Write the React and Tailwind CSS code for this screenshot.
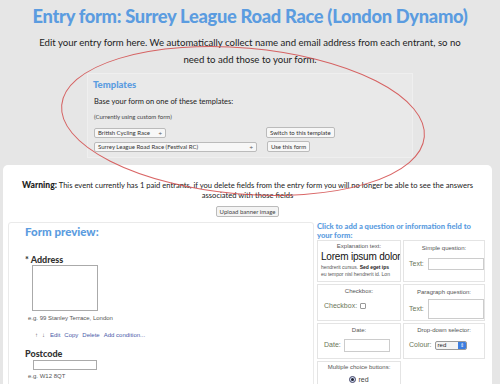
export default function App() {
  const gill = { fontFamily: 'Lato, "Open Sans", sans-serif' };
  const helv = { fontFamily: '"Liberation Sans", Arial, sans-serif' };

  return (
    <div className="relative w-[500px] h-[384px] overflow-hidden bg-[#e6e6e6] text-[#222]" style={gill}>
      <h1 className="pt-[4px] text-center whitespace-nowrap text-[18.3px] leading-[24px] font-black text-[#5b9ce0] tracking-[-0.3px]">
        Entry form: Surrey League Road Race (London Dynamo)
      </h1>
      <p className="mt-[6px] text-center text-[9.6px] leading-[17px] text-[#222] whitespace-nowrap">
        Edit your entry form here. We automatically collect name and email address from each entrant, so no<br />
        need to add those to your form.
      </p>

      <div className="mx-auto mt-[5px] w-[326px] h-[85px] border border-[#efefef] bg-[#e9e9e9] pl-[5px] pt-[5px]">
        <div className="text-[9.5px] leading-[12px] font-black text-[#5b9ce0]">Templates</div>
        <div className="mt-[5px] pl-[1px] text-[7.5px] leading-[11px]">Base your form on one of these templates:</div>
        <div className="mt-[5px] pl-[1px] text-[6px] leading-[9px] text-[#444]">(Currently using custom form)</div>
        <div className="mt-[6px] flex flex-col gap-[3px] pl-[1px]">
          <div className="flex items-center">
            <div className="flex h-[10px] w-[72px] items-center justify-between rounded-[2px] border border-[#bbb] bg-[#f7f7f7] px-[3px] text-[6px] text-[#333]">
              <span>British Cycling Race</span><span className="text-[6px]">÷</span>
            </div>
            <div className="ml-[100px] flex h-[11px] items-center rounded-[2px] border border-[#bbb] bg-[#f7f7f7] px-[3px] text-[6px] text-[#333]">Switch to this template</div>
          </div>
          <div className="flex items-center">
            <div className="flex h-[10px] w-[163px] items-center justify-between rounded-[2px] border border-[#bbb] bg-[#f7f7f7] px-[3px] text-[6px] text-[#333]">
              <span>Surrey League Road Race (Festival RC)</span><span className="text-[6px]">÷</span>
            </div>
            <div className="ml-[10px] flex h-[11px] items-center rounded-[2px] border border-[#bbb] bg-[#f7f7f7] px-[3px] text-[6px] text-[#333]">Use this form</div>
          </div>
        </div>
      </div>

      <div className="ml-[3px] mt-[7px] h-[300px] w-[489px] rounded-[5px] bg-white pt-[15px]">
        <p className="text-center text-[7.6px] leading-[10px] text-[#222] whitespace-nowrap">
          <b className="text-[8.6px] font-black">Warning:</b> This event currently has 1 paid entrants, if you delete fields from the entry form you will no longer be able to see the answers<br />
          associated with those fields
        </p>
        <div className="mt-[6px] flex justify-center">
          <div className="flex h-[11px] items-center rounded-[2px] border border-[#bbb] bg-[#f4f4f4] px-[3px] text-[6px] text-[#444]">Upload banner image</div>
        </div>

        <div className="mt-[5px] flex">
          <div className="ml-[5px] h-[200px] w-[306px] rounded-[3px] border border-[#eaeaea] pl-[16px] pt-[2px]" style={helv}>
            <div className="text-[11.5px] leading-[14px] font-black text-[#5b9ce0]" style={gill}>Form preview:</div>
            <div className="mt-[16px] text-[9px] leading-[10px] font-black text-[#333]" style={gill}>* Address</div>
            <div className="ml-[7px] h-[46px] w-[66px] border border-[#aaa]" />
            <div className="mt-[3px] ml-[3px] text-[6px] leading-[8px] text-[#555]">e.g. 99 Stanley Terrace, London</div>
            <div className="mt-[9px] ml-[10px] flex gap-[4px] text-[6px] leading-[8px] text-[#4a5aa8]">
              <span className="text-[#666]">↑</span><span className="text-[#666]">↓</span>
              <span className="ml-[1px]">Edit</span><span>Copy</span><span>Delete</span><span>Add condition...</span>
            </div>
            <div className="mt-[10px] text-[9px] leading-[10px] font-black text-[#333]" style={gill}>Postcode</div>
            <div className="ml-[8px] mt-[1px] h-[10px] w-[64px] border border-[#aaa]" />
            <div className="mt-[2px] ml-[3px] text-[6px] leading-[8px] text-[#555]">e.g. W12 8QT</div>
          </div>

          <div className="ml-[2px] w-[172px]">
            <div className="pl-[1px] text-[7.6px] leading-[9px] font-black text-[#5b9ce0] whitespace-nowrap">
              Click to add a question or information field to<br />your form:
            </div>
            <div className="ml-[1px] grid grid-cols-[84px_82px] grid-rows-[42px_37px_36px_30px] gap-[2px] text-[6px] text-[#555]" style={helv}>
              <div className="overflow-hidden border border-[#e4e4e4] pl-[3px] pt-[1px] whitespace-nowrap">
                <div className="pr-[3px] text-center leading-[8px]">Explanation text:</div>
                <div className="mt-[1px] text-[10px] leading-[11px] tracking-[-0.2px] text-[#111]">Lorem ipsum dolor</div>
                <div className="mt-[1px] text-[5px] leading-[8px]">hendrerit cursus. <b className="text-[#222]">Sed eget ips</b></div>
                <div className="text-[5px] leading-[7px]">eu tempor nisl hendrerit id. Lon</div>
              </div>
              <div className="border border-[#e4e4e4] pt-[3px]">
                <div className="text-center leading-[8px]">Simple question:</div>
                <div className="mt-[6px] flex items-center pl-[5px]">
                  <span className="text-[7px] text-[#6b7658]">Text:</span>
                  <div className="ml-[4px] h-[12px] flex-1 border border-[#ccc]" />
                </div>
              </div>
              <div className="border border-[#e4e4e4] pt-[2px]">
                <div className="text-center leading-[8px]">Checkbox:</div>
                <div className="mt-[6px] flex items-center pl-[6px]">
                  <span className="text-[7px] text-[#6b7658]">Checkbox:</span>
                  <div className="ml-[3px] h-[6px] w-[6px] rounded-[1px] border border-[#999]" />
                </div>
              </div>
              <div className="border border-[#e4e4e4] pt-[3px]">
                <div className="text-center leading-[8px]">Paragraph question:</div>
                <div className="mt-[3px] flex items-center pl-[5px]">
                  <span className="text-[7px] text-[#6b7658]">Text:</span>
                  <div className="ml-[4px] h-[20px] flex-1 border border-[#ccc]" />
                </div>
              </div>
              <div className="border border-[#e4e4e4] pt-[2px]">
                <div className="text-center leading-[8px]">Date:</div>
                <div className="mt-[5px] flex items-center pl-[6px]">
                  <span className="text-[7px] text-[#6b7658]">Date:</span>
                  <div className="ml-[3px] h-[13px] w-[46px] border border-[#ccc]" />
                </div>
              </div>
              <div className="border border-[#e4e4e4] pt-[2px]">
                <div className="text-center leading-[8px]">Drop-down selector:</div>
                <div className="mt-[6px] flex items-center pl-[5px]">
                  <span className="text-[7px] text-[#6b7658]">Colour:</span>
                  <div className="ml-[3px] flex h-[9px] w-[32px] items-center justify-between rounded-[2px] border border-[#999] bg-[#f4f4f4] pl-[2px] text-[6px] text-[#222]">
                    <span>red</span>
                    <span className="flex h-full w-[8px] items-center justify-center rounded-r-[1px] bg-[#3d7ee0] text-[5px] leading-none text-white">⇕</span>
                  </div>
                </div>
              </div>
              <div className="border border-[#e4e4e4] pt-[1px]">
                <div className="text-center leading-[8px]">Multiple choice buttons:</div>
                <div className="mt-[4px] flex items-center justify-center gap-[2px]">
                  <div className="flex h-[7px] w-[7px] items-center justify-center rounded-full border border-[#446] bg-[#cfdcf0]">
                    <div className="h-[3px] w-[3px] rounded-full bg-[#223]" />
                  </div>
                  <span className="text-[7px] leading-[9px] text-[#444]">red</span>
                </div>
              </div>
            </div>
          </div>
        </div>
      </div>

      <svg className="pointer-events-none absolute left-0 top-0" width="500" height="384">
        <ellipse cx="243" cy="121" rx="182" ry="73" transform="rotate(5 243 121)" fill="none" stroke="#d24a4a" strokeWidth="1" opacity="0.85" />
      </svg>
    </div>
  );
}
